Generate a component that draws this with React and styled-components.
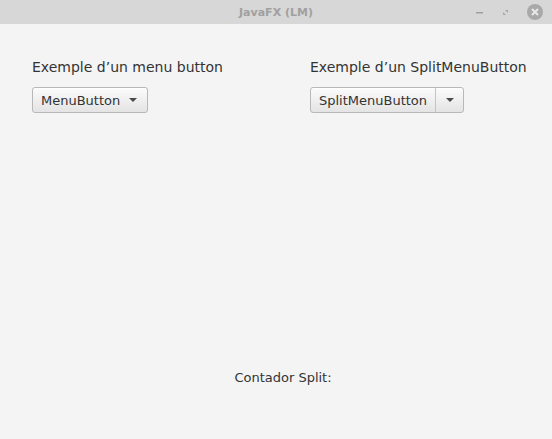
import React from "react";
import styled, { createGlobalStyle } from "styled-components";

const Global = createGlobalStyle`
  html, body { margin: 0; padding: 0; background: #f4f4f4; }
  body { width: 552px; height: 439px; overflow: hidden; font-family: "DejaVu Sans", sans-serif; }
`;

const Window = styled.div`
  width: 552px;
  height: 439px;
  display: flex;
  flex-direction: column;
  background: #f4f4f4;
`;

const TitleBar = styled.div`
  height: 24px;
  flex: none;
  background: #d7d7d7;
  position: relative;
  display: flex;
  align-items: center;
  justify-content: center;
`;

const Title = styled.div`
  font-family: "DejaVu Sans", sans-serif;
  font-weight: bold;
  font-size: 11px;
  color: #a0a0a0;
`;

const Controls = styled.div`
  position: absolute;
  right: 8px;
  top: 0;
  height: 24px;
  display: flex;
  align-items: center;
  gap: 14px;
`;

const Content = styled.div`
  flex: 1;
  display: flex;
  flex-direction: column;
  padding: 35px 32px 0 32px;
`;

const Columns = styled.div`
  display: grid;
  grid-template-columns: 278px 1fr;
`;

const Column = styled.div`
  display: flex;
  flex-direction: column;
  align-items: flex-start;
  gap: 10px;
`;

const Label = styled.div`
  font-size: 14px;
  line-height: 17px;
  color: #333;
  white-space: nowrap;
`;

const Btn = styled.div`
  height: 24px;
  margin-top: 1px;
  display: flex;
  align-items: stretch;
  border: 1px solid #b8b8b8;
  border-radius: 3px;
  background: linear-gradient(#fbfbfb, #e4e4e4);
  box-shadow: inset 0 1px 0 #fff;
  font-size: 13px;
  color: #333;
  box-sizing: content-box;
`;

const BtnText = styled.div`
  display: flex;
  align-items: center;
  white-space: nowrap;
  padding: 0 ${(p) => p.$pr}px 0 8px;
`;

const ArrowPart = styled.div`
  display: flex;
  align-items: center;
  justify-content: center;
  width: ${(p) => p.$w}px;
  margin-right: ${(p) => p.$mr || 0}px;
  border-left: ${(p) => (p.$split ? "1px solid #c4c4c4" : "none")};
`;

const Arrow = styled.div`
  width: 0;
  height: 0;
  border-left: 4px solid transparent;
  border-right: 4px solid transparent;
  border-top: 4px solid #4a4a4a;
`;

const Footer = styled.div`
  margin-top: auto;
  margin-bottom: 54px;
  display: flex;
  justify-content: center;
  padding-left: 14px;
  font-size: 13px;
  color: #333;
`;

const Minimize = () => (
  <svg width="12" height="12" viewBox="0 0 12 12">
    <rect x="2" y="6" width="7" height="1.5" fill="#a0a0a0" />
  </svg>
);
const Restore = () => (
  <svg width="12" height="12" viewBox="0 0 12 12">
    <path d="M5 4 L8 4 L8 7 Z" fill="#a8a8a8" />
    <path d="M3 6 L6 9 L3 9 Z" fill="#a8a8a8" />
  </svg>
);
const Close = () => (
  <svg width="18" height="18" viewBox="0 0 18 18">
    <circle cx="9" cy="9" r="8" fill="#a9a9a9" />
    <path d="M6 6 L12 12 M12 6 L6 12" stroke="#e8e8e8" strokeWidth="2" />
  </svg>
);

export default function App() {
  return (
    <>
      <Global />
      <Window>
        <TitleBar>
          <Title>JavaFX (LM)</Title>
          <Controls>
            <Minimize />
            <Restore />
            <Close />
          </Controls>
        </TitleBar>
        <Content>
          <Columns>
            <Column>
              <Label>Exemple d’un menu button</Label>
              <Btn>
                <BtnText $pr={5}>MenuButton</BtnText>
                <ArrowPart $w={16} $mr={6}>
                  <Arrow />
                </ArrowPart>
              </Btn>
            </Column>
            <Column>
              <Label>Exemple d’un SplitMenuButton</Label>
              <Btn>
                <BtnText $pr={8}>SplitMenuButton</BtnText>
                <ArrowPart $w={27} $split>
                  <Arrow />
                </ArrowPart>
              </Btn>
            </Column>
          </Columns>
          <Footer>Contador Split:</Footer>
        </Content>
      </Window>
    </>
  );
}
